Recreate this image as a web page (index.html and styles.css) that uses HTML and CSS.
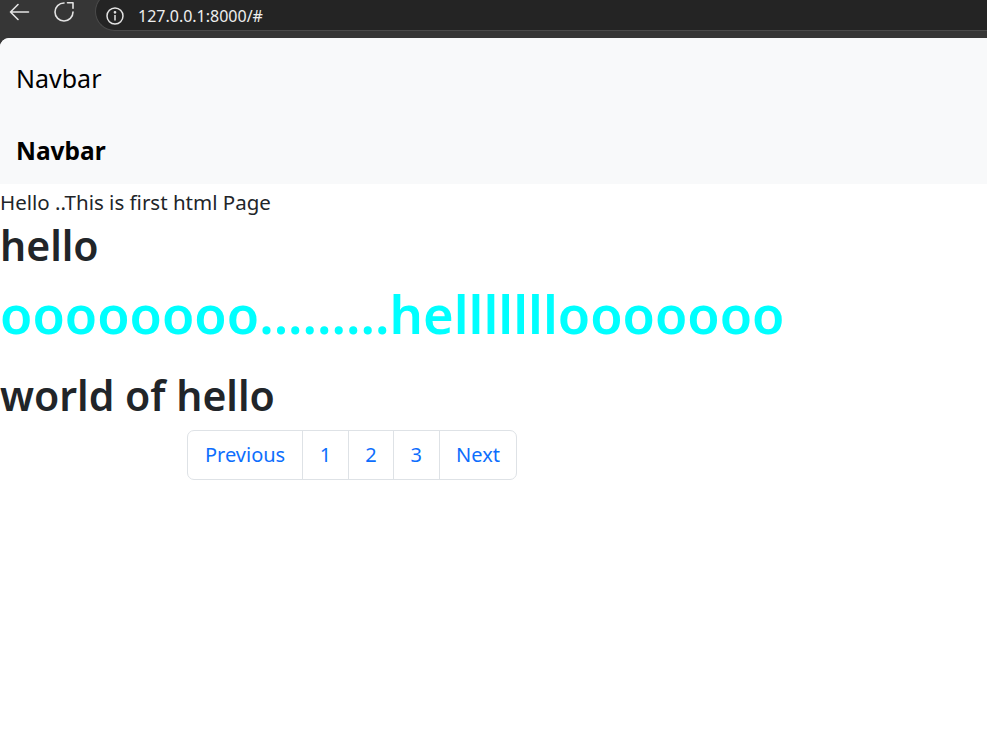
FILE: index.html
```html
<!DOCTYPE html>
<html lang="en">
  <head>
    <meta charset="UTF-8" />
    <meta name="viewport" content="width=device-width, initial-scale=1.0" />
    <title>First Page</title>
    <link rel="stylesheet" href="styles.css">
  </head>
  <body>
    <div class="chrome">
      <svg class="tool-icon" width="24" height="24" viewBox="0 0 24 24">
        <path d="M21.5 12H3.5 M11 4.5L3.5 12 11 19.5" />
      </svg>
      <svg class="tool-icon" width="24" height="24" viewBox="0 0 24 24">
        <path d="M21 12a9 9 0 1 1-9-9" />
        <path d="M15.5 2.8h5.5v5.5" />
      </svg>
      <div class="omnibox">
        <svg class="info-icon" width="20" height="20" viewBox="0 0 20 20">
          <circle cx="10" cy="10" r="8" />
          <path d="M10 9v5.5" />
          <circle class="dot" cx="10" cy="6.3" r="0.6" />
        </svg>
        <span class="url">127.0.0.1:8000/#</span>
      </div>
    </div>

    <div class="page">
      <nav class="navbar">
        <a class="brand" href="#">Navbar</a>
      </nav>
      <nav class="navbar">
        <a class="brand strong" href="#">Navbar</a>
      </nav>

      <p class="intro">Hello ..This is first html Page</p>
      <h1 class="title">hello</h1>
      <h1 class="title cyan">oooooooo.........helllllllooooooo</h1>
      <h1 class="title">world of hello</h1>

      <ul class="pagination">
        <li><a href="#">Previous</a></li>
        <li><a href="#">1</a></li>
        <li><a href="#">2</a></li>
        <li><a href="#">3</a></li>
        <li><a href="#">Next</a></li>
      </ul>
    </div>
  </body>
</html>
```

FILE: styles.css
```css
* {
  box-sizing: border-box;
}

html,
body {
  height: 100%;
}

body {
  margin: 0;
  background: #363636;
  font-family: "Noto Sans", "Open Sans", sans-serif;
  color: #212529;
  display: flex;
  flex-direction: column;
  overflow: hidden;
}

/* browser bar */
.chrome {
  height: 38px;
  flex: 0 0 38px;
  display: flex;
  align-items: flex-start;
}

.tool-icon {
  fill: none;
  stroke: #e3e3e3;
  stroke-width: 1.6;
  stroke-linecap: round;
  stroke-linejoin: round;
}

.tool-icon:first-child {
  margin-left: 7px;
}

.tool-icon + .tool-icon {
  margin-left: 21px;
}

.omnibox {
  flex: 1;
  height: 39px;
  margin-top: -8px;
  margin-left: 19px;
  background: #242424;
  border: 1px solid #4a4a4a;
  border-right: none;
  border-radius: 20px 0 0 20px;
  display: flex;
  align-items: center;
  padding: 8px 0 0 9px;
}

.info-icon {
  fill: none;
  stroke: #e3e3e3;
  stroke-width: 1.5;
}

.info-icon .dot {
  fill: #e3e3e3;
}

.url {
  margin-left: 13px;
  color: #eeeeee;
  font-size: 16px;
}

/* page */
.page {
  flex: 1;
  background: #fff;
  border-top-left-radius: 9px;
  overflow: hidden;
}

.navbar {
  height: 73px;
  background: #f8f9fa;
  display: flex;
  align-items: center;
  padding: 6px 16px 0;
}

.brand {
  font-size: 25px;
  color: #000;
  text-decoration: none;
}

.strong {
  font-weight: 700;
  font-size: 24.5px;
}

.intro {
  margin: 0;
  font-size: 20.5px;
  line-height: 36px;
}

.title {
  margin: 0 0 10px;
  font-size: 41px;
  font-weight: 600;
  line-height: 50px;
}

.cyan {
  color: #00ffff;
  font-size: 52.5px;
  line-height: 68px;
  margin-bottom: 22px;
}

.pagination {
  list-style: none;
  display: flex;
  margin: 10px 0 0 187px;
  padding: 0;
}

.pagination a {
  display: block;
  height: 50px;
  line-height: 48px;
  padding: 0 16.5px;
  font-size: 20px;
  color: #0d6efd;
  text-decoration: none;
  border: 1px solid #dee2e6;
  margin-left: -1px;
}

.pagination li:first-child a {
  margin-left: 0;
  padding: 0 17px;
  border-radius: 7px 0 0 7px;
}

.pagination li:last-child a {
  border-radius: 0 7px 7px 0;
}
```
